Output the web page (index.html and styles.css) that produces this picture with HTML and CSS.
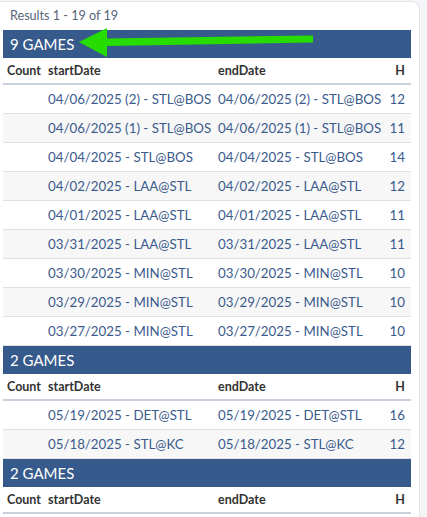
FILE: index.html
```html
<!DOCTYPE html>
<html>
<head>
<meta charset="utf-8">
<link rel="stylesheet" href="styles.css">
</head>
<body>
<div class="card">
  <div class="results">Results 1 - 19 of 19</div>

  <div class="group">
    <div class="group-title">9 GAMES</div>
    <table class="grid">
      <colgroup><col class="c1"><col class="c2"><col class="c3"><col class="c4"></colgroup>
      <thead><tr><th>Count</th><th>startDate</th><th>endDate</th><th class="num">H</th></tr></thead>
      <tbody>
        <tr><td></td><td>04/06/2025 (2) - STL@BOS</td><td>04/06/2025 (2) - STL@BOS</td><td class="num">12</td></tr>
        <tr><td></td><td>04/06/2025 (1) - STL@BOS</td><td>04/06/2025 (1) - STL@BOS</td><td class="num">11</td></tr>
        <tr><td></td><td>04/04/2025 - STL@BOS</td><td>04/04/2025 - STL@BOS</td><td class="num">14</td></tr>
        <tr><td></td><td>04/02/2025 - LAA@STL</td><td>04/02/2025 - LAA@STL</td><td class="num">12</td></tr>
        <tr><td></td><td>04/01/2025 - LAA@STL</td><td>04/01/2025 - LAA@STL</td><td class="num">11</td></tr>
        <tr><td></td><td>03/31/2025 - LAA@STL</td><td>03/31/2025 - LAA@STL</td><td class="num">11</td></tr>
        <tr><td></td><td>03/30/2025 - MIN@STL</td><td>03/30/2025 - MIN@STL</td><td class="num">10</td></tr>
        <tr><td></td><td>03/29/2025 - MIN@STL</td><td>03/29/2025 - MIN@STL</td><td class="num">10</td></tr>
        <tr><td></td><td>03/27/2025 - MIN@STL</td><td>03/27/2025 - MIN@STL</td><td class="num">10</td></tr>
      </tbody>
    </table>
  </div>

  <div class="group">
    <div class="group-title">2 GAMES</div>
    <table class="grid">
      <colgroup><col class="c1"><col class="c2"><col class="c3"><col class="c4"></colgroup>
      <thead><tr><th>Count</th><th>startDate</th><th>endDate</th><th class="num">H</th></tr></thead>
      <tbody>
        <tr><td></td><td>05/19/2025 - DET@STL</td><td>05/19/2025 - DET@STL</td><td class="num">16</td></tr>
        <tr><td></td><td>05/18/2025 - STL@KC</td><td>05/18/2025 - STL@KC</td><td class="num">12</td></tr>
      </tbody>
    </table>
  </div>

  <div class="group">
    <div class="group-title">2 GAMES</div>
    <table class="grid">
      <colgroup><col class="c1"><col class="c2"><col class="c3"><col class="c4"></colgroup>
      <thead><tr><th>Count</th><th>startDate</th><th>endDate</th><th class="num">H</th></tr></thead>
    </table>
  </div>
</div>

<svg class="arrow" width="427" height="517" viewBox="0 0 427 517">
  <polygon points="79,42 107,28 107,38.5 313,35.5 313,42.5 107,46 107,57" fill="#27dc00"/>
</svg>
</body>
</html>
```

FILE: styles.css
```css
html, body {
  margin: 0;
  padding: 0;
  background: #f4f5f7;
  font-family: Lato, "Open Sans", "Liberation Sans", sans-serif;
  overflow: hidden;
}

body {
  position: relative;
  width: 427px;
  height: 517px;
}

.card {
  box-sizing: border-box;
  width: 428px;
  height: 516px;
  margin: 1px 0 0 -8px;
  padding: 0 8px 0 10px;
  background: #ffffff;
  border: 1px solid #e2e4e8;
  border-bottom: none;
  border-radius: 0 8px 0 0;
}

.results {
  padding: 4px 0 0 7px;
  height: 24px;
  line-height: 20px;
  font-size: 12.6px;
  color: #566579;
}

.group-title {
  height: 28px;
  line-height: 28px;
  padding-left: 7px;
  background: #365a8b;
  color: #ffffff;
  font-size: 15px;
}

.grid {
  width: 408px;
  table-layout: fixed;
  border-collapse: collapse;
  border-spacing: 0;
}

.c1 { width: 41px; }
.c2 { width: 170px; }
.c3 { width: 171px; }
.c4 { width: 26px; }

.grid th {
  height: 25px;
  padding: 0 4px;
  text-align: left;
  font-size: 12.5px;
  font-weight: 700;
  color: #333333;
  border-bottom: 2px solid #c8d1dd;
  white-space: nowrap;
}

.grid td {
  height: 28px;
  padding: 0 2px 0 4px;
  font-size: 13.3px;
  color: #3a5a8c;
  border-bottom: 1px solid #e0e0e0;
  white-space: nowrap;
}

.grid tbody tr:nth-child(even) td {
  background: #f7f7f7;
}

.grid .num {
  text-align: right;
  padding-right: 6px;
}

.arrow {
  position: absolute;
  left: 0;
  top: 0;
  pointer-events: none;
}
```
